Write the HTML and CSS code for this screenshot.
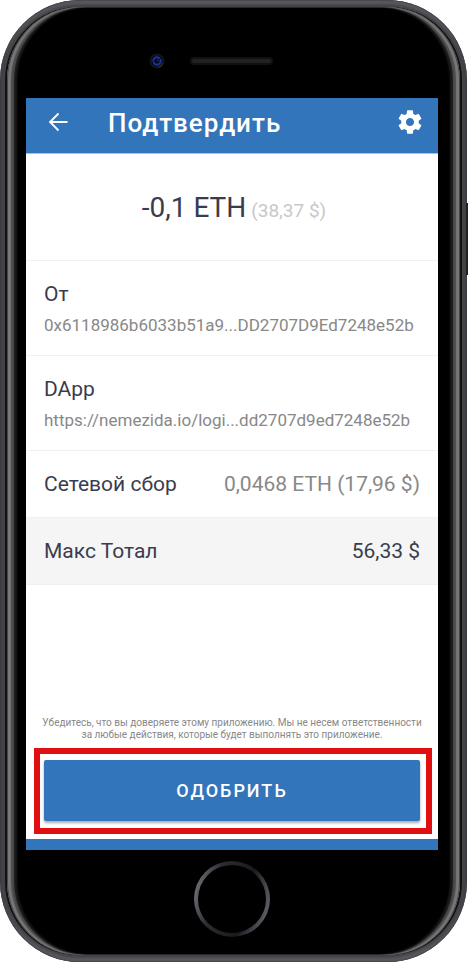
FILE: index.html
```html
<!DOCTYPE html>
<html lang="ru">
<head>
<meta charset="utf-8">
<meta name="viewport" content="width=device-width, initial-scale=1">
<title>Подтвердить</title>
<link rel="stylesheet" href="styles.css">
</head>
<body>
<div class="phone">
  <span class="power"></span>
  <div class="glass">
    <div class="sensors">
      <svg class="camera" width="16" height="16" viewBox="0 0 16 16" aria-hidden="true">
        <circle cx="8" cy="8" r="7.5" fill="#151515"/>
        <path d="M13.5 10A6.2 6.2 0 0 1 9 14" fill="none" stroke="#333" stroke-width="1.2"/>
        <circle cx="8" cy="8" r="5.500" fill="#080b20"/>
        <circle cx="8" cy="8" r="3.700" fill="none" stroke="#1a349c" stroke-width="2" stroke-dasharray="10 1 9 1"/>
        <circle cx="9" cy="7.500" r="1.200" fill="#102058"/>
      </svg>
      <span class="speaker"></span>
    </div>
    <main class="screen">
      <header class="bar">
        <button class="icon" type="button" aria-label="Назад">
          <svg width="24" height="24" viewBox="0 0 24 24" fill="none" stroke="#fff" stroke-width="1.8"><path d="M21.5 12H4M12.5 3.5L4 12l8.500 8.500"/></svg>
        </button>
        <h1>Подтвердить</h1>
        <button class="icon" type="button" aria-label="Настройки">
          <svg width="28" height="28" viewBox="0 0 24 24" fill="#fff"><path d="M19.430 12.980c.04-.32.07-.64.07-.98s-.03-.66-.07-.98l2.110-1.650c.19-.15.24-.42.12-.64l-2-3.460c-.12-.22-.39-.3-.61-.22l-2.490 1c-.52-.4-1.080-.73-1.690-.98l-.38-2.650C14.460 2.180 14.250 2 14 2h-4c-.25 0-.46.18-.49.42l-.38 2.650c-.61.25-1.170.59-1.690.98l-2.490-1c-.23-.09-.49 0-.61.22l-2 3.460c-.13.22-.07.49.12.64l2.110 1.650c-.04.32-.07.65-.07.98s.03.66.07.98l-2.110 1.650c-.19.15-.24.42-.12.64l2 3.460c.12.22.39.3.61.22l2.490-1c.52.4 1.080.73 1.690.98l.38 2.650c.03.24.24.42.49.42h4c.25 0 .46-.18.49-.42l.38-2.650c.61-.25 1.170-.59 1.690-.98l2.490 1c.23.09.49 0 .61-.22l2-3.460c.12-.22.07-.49-.12-.64l-2.110-1.650zM12 15.500c-1.930 0-3.500-1.570-3.500-3.500s1.570-3.500 3.500-3.500 3.500 1.570 3.500 3.500-1.570 3.500-3.500 3.500z"/></svg>
        </button>
      </header>
      <p class="amount">-0,1 ETH <span>(38,37 $)</span></p>
      <section class="detail">
        <h2>От</h2>
        <p>0x6118986b6033b51a9...DD2707D9Ed7248e52b</p>
      </section>
      <section class="detail">
        <h2>DApp</h2>
        <p>https://nemezida.io/logi...dd2707d9ed7248e52b</p>
      </section>
      <div class="row"><h2>Сетевой сбор</h2><p>0,0468 ETH (17,96 $)</p></div>
      <div class="row total"><h2>Макс Тотал</h2><p>56,33 $</p></div>
      <p class="note">Убедитесь, что вы доверяете этому приложению. Мы не несем ответственности за любые действия, которые будет выполнять это приложение.</p>
      <div class="highlight"><button class="approve" type="button">ОДОБРИТЬ</button></div>
      <div class="nav"></div>
    </main>
    <div class="chin"><span class="home"></span></div>
  </div>
</div>
</body>
</html>
```
FILE: styles.css
```css
* { box-sizing: border-box; }

body {
  margin: 0;
  background: #fff;
  font-family: Roboto, "Liberation Sans", sans-serif;
  color: #3a3c4e;
}

h1, h2, p { margin: 0; font-weight: 400; }

button {
  border: 0;
  padding: 0;
  color: #fff;
  font-family: inherit;
  cursor: pointer;
}

.phone {
  position: relative;
  display: flex;
  min-height: 100vh;
  margin-right: 1px;
  padding: 7px;
  border-radius: 80px;
  background: #424347;
  box-shadow: inset 0 0 2px #1c1c1e, inset 0 5px 3px -1px #5b5c60, inset 0 -5px 3px -1px #5b5c60;
}

.power {
  position: absolute;
  top: 203px;
  right: -1px;
  width: 2px;
  height: 72px;
  background: #222;
}

.glass {
  flex: 1;
  min-width: 0;
  display: flex;
  flex-direction: column;
  padding: 0 22px 0 19px;
  border-radius: 73px;
  background: #000;
  box-shadow:
    -2px 0 0 #111,
    2px 0 0 #111,
    inset 1px 0 #484848,
    inset -1px 0 #484848,
    inset 4px 0 1px #777,
    inset -4px 0 1px #777,
    inset 7px 0 1px #4c4c4c,
    inset -7px 0 1px #4c4c4c,
    inset 10px 0 2px #1c1c1c,
    inset -10px 0 2px #1c1c1c;
}

.sensors {
  display: flex;
  align-items: center;
  gap: 25px;
  height: 91px;
  padding: 17px 0 0 123px;
}

.speaker {
  width: 83px;
  height: 8px;
  border: 2px solid #111;
  border-radius: 4px;
  background: #222;
}

.screen {
  flex: 1;
  display: flex;
  flex-direction: column;
  background: #fff;
}

.bar {
  display: flex;
  align-items: center;
  height: 56px;
  padding: 0 14px 8px 20px;
  background: #3275bb;
  border-bottom: 1px solid #a5c3e3;
}

.bar h1 {
  flex: 1;
  padding: 3px 0 0 38px;
  font-size: 26px;
  font-weight: 500;
  line-height: 32px;
  letter-spacing: 1px;
  color: #fff;
}

.icon { display: flex; background: none; }

.amount {
  padding: 36px 14px 31px 18px;
  border-bottom: 1px solid #f0f0f0;
  font-size: 28px;
  line-height: 36px;
  text-align: center;
}

.amount span {
  margin-left: -2px;
  font-size: 19px;
  color: #c8c8cc;
}

h2, .row p { font-size: 21px; line-height: 26px; }

.detail {
  padding: 20px 18px 18px;
  border-bottom: 1px solid #f0f0f0;
}

.detail p {
  padding-top: 6px;
  font-size: 17px;
  line-height: 24px;
  white-space: nowrap;
  color: #888;
}

.row {
  display: flex;
  justify-content: space-between;
  padding: 20px 18px;
  border-bottom: 1px solid #f0f0f0;
}

.row p { color: #888; }

.total { background: #f5f5f5; }

.total p { color: inherit; }

.note {
  margin-top: auto;
  padding: 0 14px 7px;
  font-size: 10px;
  line-height: 12px;
  text-align: center;
  color: #888;
}

.highlight {
  margin: 0 6px 5px 8px;
  padding: 6px 6px 6px 4px;
  border: 6px solid #e20f12;
}

.approve {
  display: block;
  width: 100%;
  height: 61px;
  margin-bottom: 1px;
  border-radius: 2px;
  background: #3275bb;
  box-shadow: 0 2px 3px #0005;
  font-size: 18px;
  font-weight: 500;
  letter-spacing: 2px;
}

.nav { height: 11px; background: #3275bb; }

.chin {
  display: flex;
  justify-content: center;
  height: 105px;
  padding-top: 11px;
}

.home {
  width: 76px;
  height: 76px;
  border: 4px solid transparent;
  border-radius: 50%;
  background:
    linear-gradient(#000, #000) padding-box,
    linear-gradient(105deg, #85858c, #2c2c32 30%, #19191e 65%, #77777e) border-box;
}
```
